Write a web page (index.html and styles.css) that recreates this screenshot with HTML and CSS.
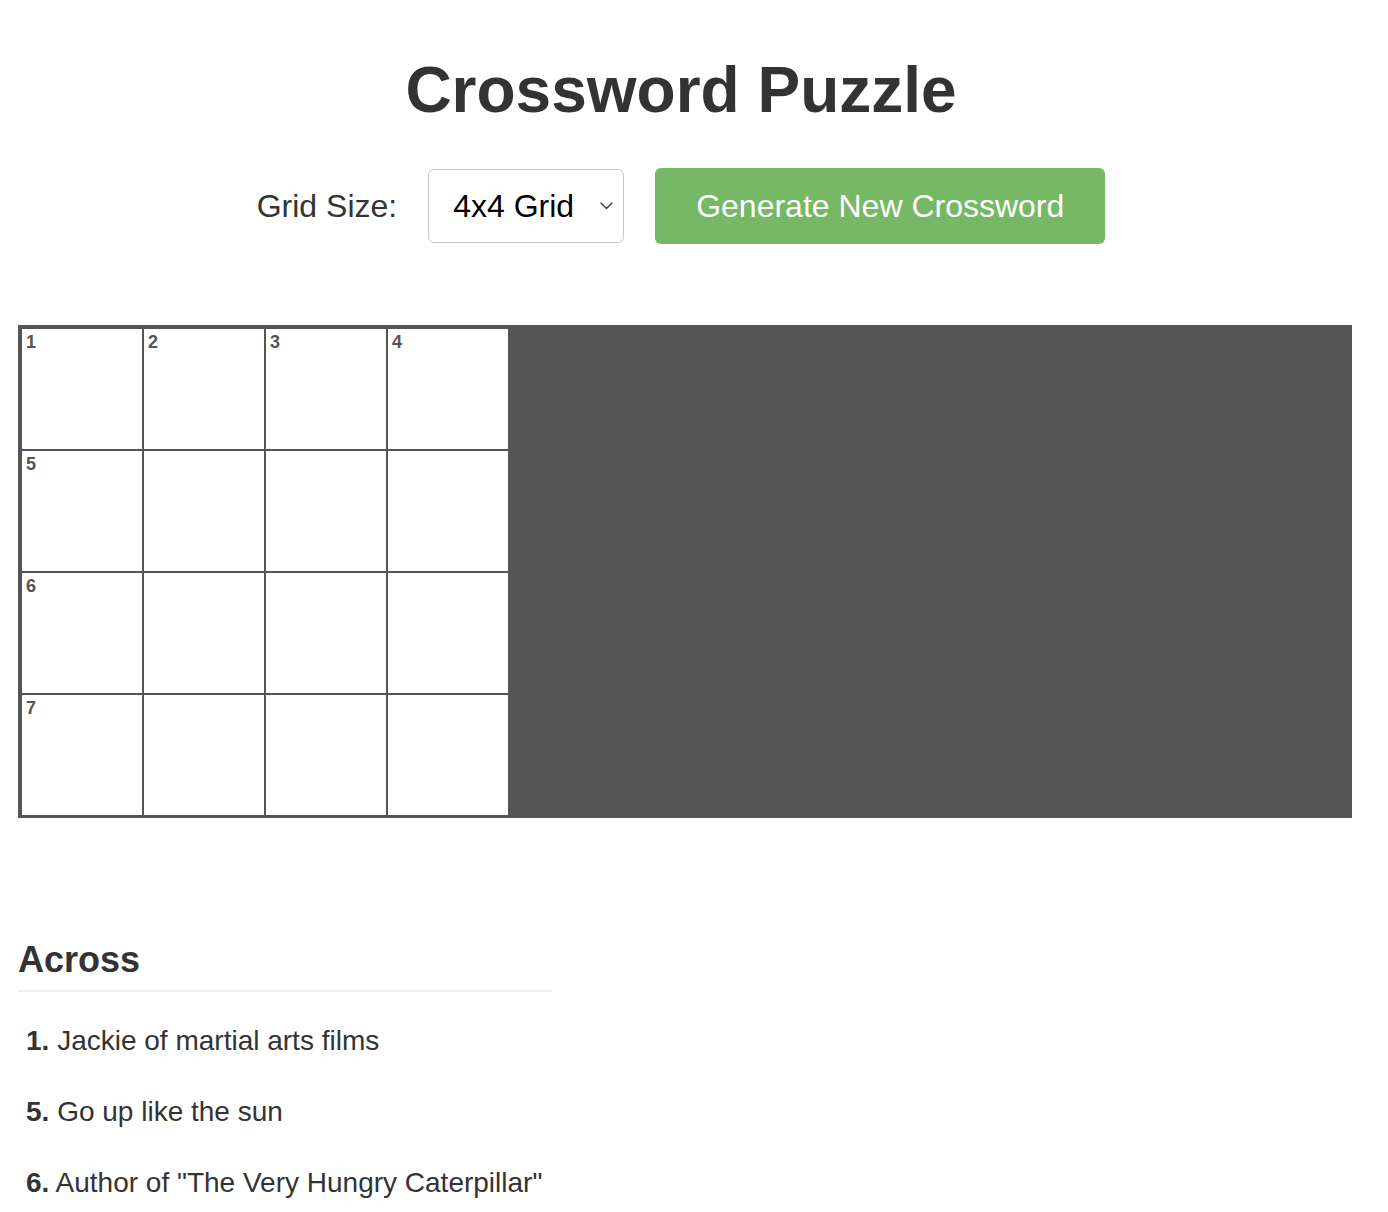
FILE: index.html
```html
<!DOCTYPE html>
<html lang="en">
<head>
<meta charset="utf-8">
<title>Crossword Puzzle</title>
<link rel="stylesheet" href="styles.css">
</head>
<body>
<div class="container">
  <h1 class="title">Crossword Puzzle</h1>
  <div class="controls">
    <label class="size-label" for="size">Grid Size:</label>
    <span class="select-wrap">
      <select id="size" class="size-select">
        <option>4x4 Grid</option>
        <option>5x5 Grid</option>
        <option>6x6 Grid</option>
      </select>
      <svg class="chevron" width="13" height="8" viewBox="0 0 13 8" aria-hidden="true"><polyline points="1,1 6.5,6.5 12,1" fill="none" stroke="#333" stroke-width="1.3" stroke-linecap="round" stroke-linejoin="round"/></svg>
    </span>
    <button class="generate">Generate New Crossword</button>
  </div>

  <div class="grid">
    <div class="cell"><span class="num">1</span></div>
    <div class="cell"><span class="num">2</span></div>
    <div class="cell"><span class="num">3</span></div>
    <div class="cell"><span class="num">4</span></div>
    <div class="cell"><span class="num">5</span></div>
    <div class="cell"></div>
    <div class="cell"></div>
    <div class="cell"></div>
    <div class="cell"><span class="num">6</span></div>
    <div class="cell"></div>
    <div class="cell"></div>
    <div class="cell"></div>
    <div class="cell"><span class="num">7</span></div>
    <div class="cell"></div>
    <div class="cell"></div>
    <div class="cell"></div>
  </div>

  <div class="clues">
    <section class="clue-col">
      <h2 class="clue-title">Across</h2>
      <ul class="clue-list">
        <li><b>1.</b> Jackie of martial arts films</li>
        <li><b>5.</b> Go up like the sun</li>
        <li><b>6.</b> Author of "The Very Hungry Caterpillar"</li>
        <li><b>7.</b> Makes a mistake</li>
      </ul>
    </section>
    <section class="clue-col">
      <h2 class="clue-title">Down</h2>
      <ul class="clue-list">
        <li><b>1.</b> Taxi</li>
        <li><b>2.</b> Cry of discovery</li>
        <li><b>3.</b> Not out</li>
        <li><b>4.</b> Small bite</li>
      </ul>
    </section>
  </div>
</div>
</body>
</html>
```

FILE: styles.css
```css
html, body {
  margin: 0;
  padding: 0;
  background: #ffffff;
}

html {
  overflow-y: scroll;
}

::-webkit-scrollbar {
  width: 15px;
  background: #f1f1f1;
}

::-webkit-scrollbar-track {
  background: #f1f1f1;
  border-left: 1px solid #e8e8e8;
}

::-webkit-scrollbar-thumb {
  background: #f1f1f1;
}

body {
  font-family: "Liberation Sans", Arial, Helvetica, sans-serif;
  color: #333333;
}

.container {
  width: 1326px;
  padding: 0 18px 60px 18px;
}

.title {
  margin: 53px 0 0 0;
  font-size: 64px;
  font-weight: bold;
  text-align: center;
  color: #333333;
  line-height: normal;
}

.controls {
  margin-top: 41px;
  display: flex;
  justify-content: center;
  align-items: center;
  gap: 31px;
  height: 76px;
}

.size-label {
  font-size: 32px;
  color: #333333;
}

.select-wrap {
  position: relative;
  display: inline-block;
}

.size-select {
  appearance: none;
  -webkit-appearance: none;
  box-sizing: border-box;
  width: 196px;
  height: 74px;
  padding: 0 40px 0 24px;
  border: 1px solid #c9c9c9;
  border-radius: 6px;
  background: #ffffff;
  font-family: "Liberation Sans", Arial, Helvetica, sans-serif;
  font-size: 32px;
  color: #000000;
  display: block;
}

.chevron {
  position: absolute;
  right: 11px;
  top: 33px;
  pointer-events: none;
}

.generate {
  box-sizing: border-box;
  height: 76px;
  padding: 0 41px;
  border: none;
  border-radius: 6px;
  background: #76b866;
  color: #ffffff;
  font-family: "Liberation Sans", Arial, Helvetica, sans-serif;
  font-size: 32px;
}

.grid {
  margin-top: 81px;
  display: grid;
  grid-template-columns: repeat(4, 120px);
  grid-auto-rows: 120px;
  gap: 2px;
  padding: 4px 4px 3px 4px;
  background: #555555;
  width: 100%;
}

.cell {
  position: relative;
  background: #ffffff;
}

.num {
  position: absolute;
  top: 3px;
  left: 4px;
  font-size: 18px;
  font-weight: bold;
  color: #555555;
  line-height: normal;
}

.clues {
  margin-top: 121px;
  display: flex;
  flex-direction: column;
}

.clue-col {
  width: 534px;
}

.clue-title {
  margin: 0;
  font-size: 36px;
  font-weight: bold;
  line-height: normal;
  color: #333333;
  padding-bottom: 9px;
  border-bottom: 2px solid #eeeeee;
}

.clue-list {
  list-style: none;
  margin: 25px 0 40px 0;
  padding: 0;
}

.clue-list li {
  font-size: 28px;
  line-height: normal;
  padding: 8px 8px;
  margin-bottom: 23px;
  color: #333333;
}
```
